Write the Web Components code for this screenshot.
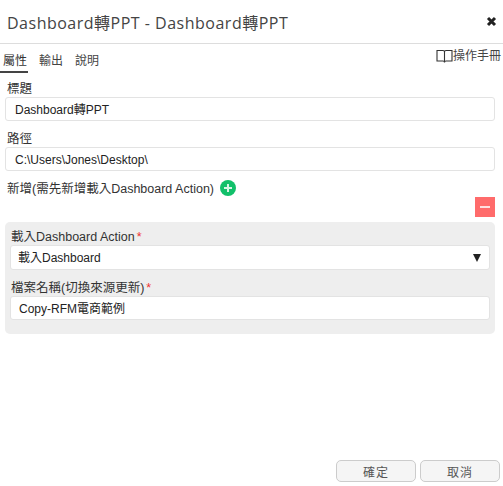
<!DOCTYPE html>
<html>
<head>
<meta charset="utf-8">
<title>Dashboard轉PPT</title>
<style>
    html, body { margin: 0; height: 100%; background: #fff; }
    body { font-family: "Liberation Sans", "Noto Sans CJK TC", sans-serif; font-size: 12px; color: #333; overflow: hidden; }
</style>
</head>
<body>
<ppt-dialog heading="Dashboard轉PPT - Dashboard轉PPT">
    <ppt-tabs slot="tabs"></ppt-tabs>
    <ppt-field label="標題" value="Dashboard轉PPT"></ppt-field>
    <ppt-field label="路徑" value="C:\Users\Jones\Desktop\"></ppt-field>
    <ppt-add-row label="新增(需先新增載入Dashboard Action)"></ppt-add-row>
    <ppt-action-panel>
        <ppt-field compact required label="載入Dashboard Action" value="載入Dashboard" select></ppt-field>
        <ppt-field compact required label="檔案名稱(切換來源更新)" value="Copy-RFM電商範例"></ppt-field>
    </ppt-action-panel>
</ppt-dialog>

<script type="text/javascript">
    // 對話框外框
    class PptDialog extends HTMLElement {
        constructor() {
            super();
            var shadow = this.attachShadow({mode: 'open'});
            shadow.innerHTML = `
            <style>
                :host { display: flex; flex-direction: column; height: 486px; box-sizing: border-box; }
                header { height: 43px; flex: none; display: flex; align-items: center; justify-content: space-between;
                    padding: 0 6px 0 7px; border-bottom: 1px solid #ddd; }
                h1 { margin: 0; font: 400 16px "Open Sans", "Noto Sans CJK TC", sans-serif; color: #444; letter-spacing: .5px; }
                svg { display: block; }
                main { flex: 1; padding: 6px 8px 0 5px; }
                footer { flex: none; display: flex; justify-content: flex-end; gap: 4px; padding: 0 3px 4px 0; }
                button { width: 80px; height: 22px; padding: 0; border: 1px solid #ccc; border-radius: 5px; background: #f5f5f5;
                    font: 12px "Liberation Sans", "Noto Sans CJK TC", sans-serif; color: #555; letter-spacing: 1px; }
            </style>
            <header>
                <h1></h1>
                <svg width="11" height="11" viewBox="0 0 11 11"><path d="M2 2l7 7M9 2l-7 7" stroke="#222" stroke-width="3"/></svg>
            </header>
            <slot name="tabs"></slot>
            <main><slot></slot></main>
            <footer><button type="button">確定</button><button type="button">取消</button></footer>`;
            shadow.querySelector('h1').textContent = this.getAttribute('heading');
        }
    }

    // 頁籤列
    class PptTabs extends HTMLElement {
        constructor() {
            super();
            var shadow = this.attachShadow({mode: 'open'});
            shadow.innerHTML = `
            <style>
                :host { display: flex; height: 30px; align-items: flex-start; justify-content: space-between; }
                nav { display: flex; gap: 12px; padding-top: 10px; }
                span { display: block; height: 17px; line-height: 15px; color: #444; }
                span.on { border-bottom: 2px solid #444; padding: 0 1px 0 3px; margin-right: -1px; color: #333; }
                .manual { display: flex; align-items: center; padding: 5px 2px 0 0; color: #666; line-height: 16px; }
            </style>
            <nav><span class="on">屬性</span><span>輸出</span><span>說明</span></nav>
            <div class="manual">
                <svg width="17" height="15" viewBox="0 0 17 15"><path d="M1 1.500h6c1 0 1.500.5 1.500 1.500 0-1 .5-1.500 1.500-1.500h6v10.500h-6c-1 0-1.500.5-1.500 1.500 0-1-.5-1.500-1.500-1.500h-6z M8.500 3v10" fill="none" stroke="#333" stroke-width="1.100"/></svg>
                <span style="height:auto">操作手冊</span>
            </div>`;
        }
    }

    // 欄位:標籤 + 輸入框或下拉
    class PptField extends HTMLElement {
        constructor() {
            super();
            var shadow = this.attachShadow({mode: 'open'});
            shadow.innerHTML = `
            <style>
                :host { display: block; margin-bottom: 9px; }
                label { display: block; height: 17px; line-height: 19px; padding-left: 2px; color: #333; font-size: 12.5px; }
                :host([compact]) label { padding-left: 1px; }
                i { font-style: normal; color: #e33; margin-left: 2px; }
                .box { box-sizing: border-box; height: 24px; line-height: 24px; border: 1px solid #e3e3e3; border-radius: 3px;
                    background: #fff; padding: 0 9px; color: #222; display: flex; justify-content: space-between; }
                :host([compact]) .box { padding: 0 8px; }
                :host([select]) .box { height: 25px; line-height: 25px; padding: 0 8px 0 7px; }
                b { font-size: 0; align-self: center; border: solid transparent; border-width: 8px 4px 0; border-top-color: #222; }
            </style>
            <label></label>
            <div class="box"><span></span></div>`;
            var label = shadow.querySelector('label');
            label.textContent = this.getAttribute('label');
            if (this.hasAttribute('required')) {
                label.insertAdjacentHTML('beforeend', '<i>*</i>');
            }
            shadow.querySelector('span').textContent = this.getAttribute('value');
            if (this.hasAttribute('select')) {
                shadow.querySelector('.box').insertAdjacentHTML('beforeend', '<b></b>');
            }
        }
    }

    // 新增列 + 綠色按鈕
    class PptAddRow extends HTMLElement {
        constructor() {
            super();
            var shadow = this.attachShadow({mode: 'open'});
            shadow.innerHTML = `
            <style>
                :host { display: flex; align-items: center; gap: 6px; height: 16px; padding-left: 2px; color: #333; font-size: 12.5px; }
                span { padding-bottom: 2px; }
            </style>
            <span></span>
            <svg width="16" height="16" viewBox="0 0 16 16"><circle cx="8" cy="8" r="8" fill="#12c06a"/><path d="M8 4v8M4 8h8" stroke="#d8f5e6" stroke-width="2"/></svg>`;
            shadow.querySelector('span').textContent = this.getAttribute('label');
        }
    }

    // 灰色 Action 區塊
    class PptActionPanel extends HTMLElement {
        constructor() {
            super();
            var shadow = this.attachShadow({mode: 'open'});
            shadow.innerHTML = `
            <style>
                :host { display: block; margin-top: 1px; }
                .tools { display: flex; justify-content: flex-end; padding: 0 0 5px; }
                .minus { width: 20px; height: 20px; background: #ff6b6b; display: flex; align-items: center; justify-content: center; }
                .minus::before { content: ""; width: 10px; height: 2px; background: #ffe0e0; }
                .panel { box-sizing: border-box; height: 112px; background: #eee; border-radius: 5px; padding: 6px 5px 0; }
            </style>
            <div class="tools"><div class="minus"></div></div>
            <div class="panel"><slot></slot></div>`;
        }
    }

    customElements.define('ppt-dialog', PptDialog);
    customElements.define('ppt-tabs', PptTabs);
    customElements.define('ppt-field', PptField);
    customElements.define('ppt-add-row', PptAddRow);
    customElements.define('ppt-action-panel', PptActionPanel);
</script>
</body>
</html>
